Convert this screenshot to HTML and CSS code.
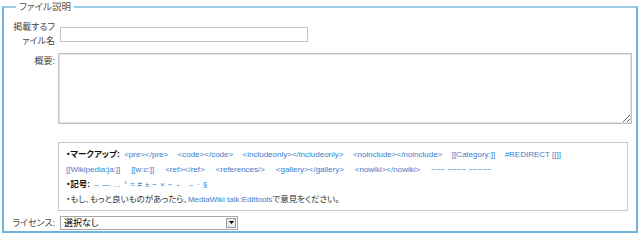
FILE: index.html
```html
<!DOCTYPE html>
<html lang="ja">
<head>
    <meta charset="UTF-8">
    <title>ファイル説明</title>
    <link rel="stylesheet" href="styles.css">
</head>
<body>
    <fieldset class="desc">
        <legend>ファイル説明</legend>
        <div class="form">
            <label class="lbl" for="destName">掲載するフ<br>ァイル名</label>
            <div class="cell"><input type="text" id="destName" class="name-input"></div>

            <label class="lbl lbl-top" for="summary">概要:</label>
            <div class="cell"><textarea id="summary" class="summary"></textarea></div>

            <div></div>
            <div class="cell edittools">
                <p><b>・マークアップ:</b>
                    <a>&lt;pre&gt;&lt;/pre&gt;</a>
                    <a>&lt;code&gt;&lt;/code&gt;</a>
                    <a>&lt;includeonly&gt;&lt;/includeonly&gt;</a>
                    <a>&lt;noinclude&gt;&lt;/noinclude&gt;</a>
                    <a>[[Category:]]</a>
                    <a>#REDIRECT [[]]</a>
                </p>
                <p class="wide">
                    <a>[[Wikipedia:ja:]]</a>
                    <a>[[w:c:]]</a>
                    <a>&lt;ref&gt;&lt;/ref&gt;</a>
                    <a>&lt;references/&gt;</a>
                    <a>&lt;gallery&gt;&lt;/gallery&gt;</a>
                    <a>&lt;nowiki&gt;&lt;/nowiki&gt;</a>
                    <a>~~~ ~~~~ ~~~~~</a>
                </p>
                <p class="symbols"><b>・記号:</b>
                    <a>–</a><a>—</a><a>…</a><a>°</a><a>≈</a><a>≠</a><a>±</a><a>−</a><a>×</a><a>÷</a><a>←</a><a>→</a><a>·</a><a>§</a>
                </p>
                <p>・もし、もっと良いものがあったら、<a class="inline">MediaWiki talk:Edittools</a>で意見をください。</p>
            </div>

            <label class="lbl" for="license">ライセンス:</label>
            <div class="cell">
                <div class="select" id="license">
                    <span>選択なし</span>
                    <span class="drop"><svg width="5" height="3" viewBox="0 0 5 3"><path d="M0 0h5L2.5 3z" fill="#000"/></svg></span>
                </div>
            </div>
        </div>
    </fieldset>
</body>
</html>
```

FILE: styles.css
```css
* {
    box-sizing: border-box;
}
body {
    margin: 0;
    background: #fff;
    font-family: "Liberation Sans", "Noto Sans CJK JP", sans-serif;
    font-size: 9px;
    color: #333;
    font-feature-settings: "palt";
}
.desc {
    margin: 0 2px;
    padding: 6px 5px 12px 8px;
    border: 2px solid #72b3de;
    border-top-color: #9ccbea;
    height: 233px;
    min-width: 0;
}
.desc legend {
    margin-left: 4px;
    padding: 0 3px;
    line-height: 14px;
    font-size: 9.5px;
    color: #555;
}
.form {
    display: grid;
    grid-template-columns: 43px 1fr;
    column-gap: 3px;
    row-gap: 5px;
    align-items: center;
}
.lbl {
    text-align: right;
    line-height: 14px;
    color: #444;
}
.lbl-top {
    align-self: start;
    padding-top: 1px;
}
.name-input {
    display: block;
    margin-left: 2px;
    width: 248px;
    height: 15px;
    border: 1px solid #c4c4c4;
    padding: 0;
}
.summary {
    display: block;
    width: 574px;
    height: 71px;
    border: 1px solid #c2c2c2;
    box-shadow: inset 0 0 0 1px #e4e4e4;
    resize: vertical;
    padding: 0;
}
.edittools {
    margin-top: 13px;
    width: 570px;
    border: 1px solid #c9c9c9;
    padding: 4px 6px 3px 7px;
    font-size: 8.5px;
    color: #333;
}
.edittools p {
    margin: 0;
    line-height: 14px;
    white-space: nowrap;
}
.edittools b {
    color: #111;
    margin-right: 2px;
}
.edittools a {
    color: #3a7cc9;
    font-size: 8px;
    margin-right: 7px;
}
.edittools .wide a {
    margin-right: 8.5px;
}
.edittools .symbols a {
    margin-right: 3px;
}
.edittools a.inline {
    margin-right: 0;
}
.select {
    margin-left: 2px;
    margin-top: -1px;
    width: 178px;
    height: 14px;
    border: 1px solid #a8a8a8;
    display: flex;
    align-items: center;
    justify-content: space-between;
    padding: 0 1px 0 3px;
    color: #000;
    font-size: 9px;
}
.drop {
    width: 10px;
    height: 10px;
    border: 1px solid #9a9a9a;
    background: #e8e8e8;
    display: flex;
    align-items: center;
    justify-content: center;
}
```
